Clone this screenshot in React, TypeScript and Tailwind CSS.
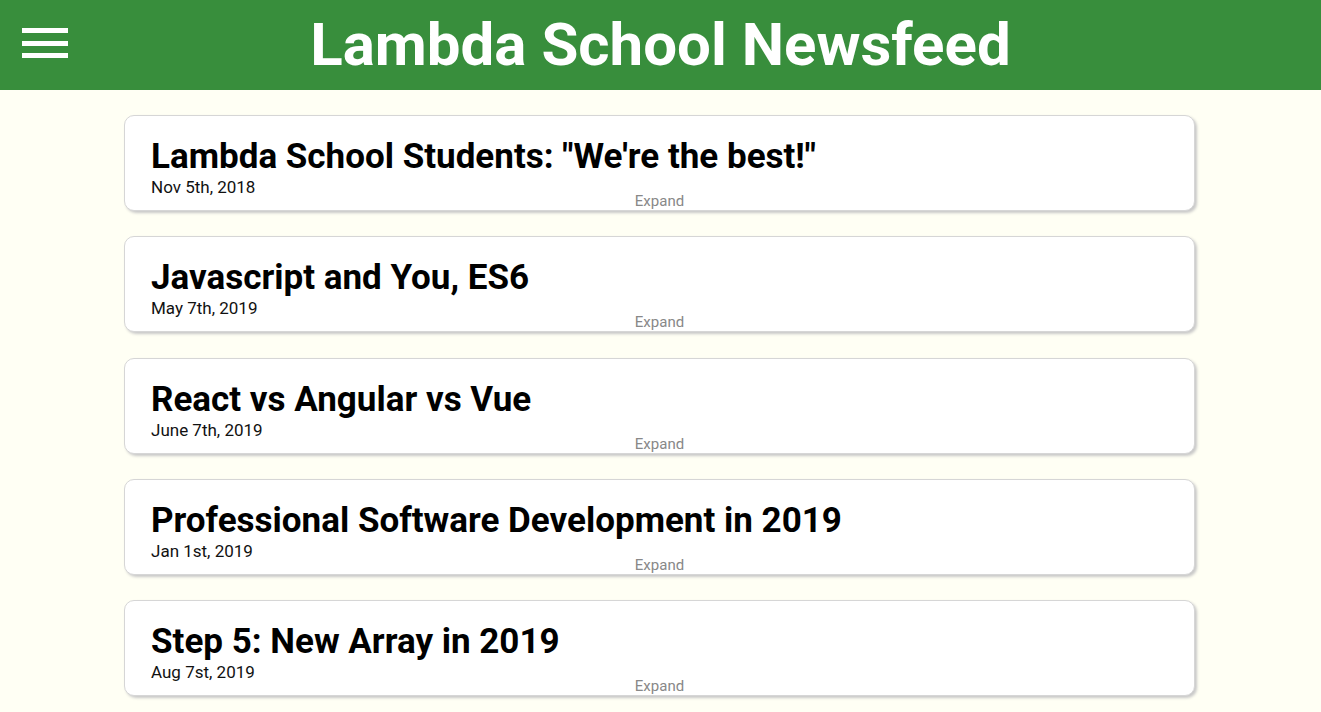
import React from "react";

const articles = [
  { title: 'Lambda School Students: "We\'re the best!"', date: "Nov 5th, 2018" },
  { title: "Javascript and You, ES6", date: "May 7th, 2019" },
  { title: "React vs Angular vs Vue", date: "June 7th, 2019" },
  { title: "Professional Software Development in 2019", date: "Jan 1st, 2019" },
  { title: "Step 5: New Array in 2019", date: "Aug 7st, 2019" },
];

export default function App() {
  return (
    <div className="min-h-screen bg-[#fffff4] font-['Roboto',sans-serif]">
      <header className="relative h-[90px] bg-[#388e3c] flex items-center justify-center">
        <div className="absolute left-[22px] top-[28px] flex flex-col gap-[7.5px]">
          <div className="w-[46px] h-[5px] bg-white" />
          <div className="w-[46px] h-[5px] bg-white" />
          <div className="w-[46px] h-[5px] bg-white" />
        </div>
        <h1 className="text-white font-bold text-[60px] leading-none">Lambda School Newsfeed</h1>
      </header>
      <main className="flex flex-col items-center pr-[2px] pt-[25px] gap-[25.3px] pb-[20px]">
        {articles.map((a) => (
          <div
            key={a.title}
            className="w-[1071px] h-[96px] bg-white border border-[#d6d6d6] rounded-[10px] shadow-[2px_2px_3px_#c8c8c8] px-[26px] pt-[20px] flex flex-col"
          >
            <h2 className="text-[35px] font-bold leading-[41px] text-black">{a.title}</h2>
            <p className="text-[17px] leading-[20px] mt-[0px] text-[#111111]">{a.date}</p>
            <div className="text-center text-[15px] leading-[18px] text-[#888888] -mt-[5px]">Expand</div>
          </div>
        ))}
      </main>
    </div>
  );
}
